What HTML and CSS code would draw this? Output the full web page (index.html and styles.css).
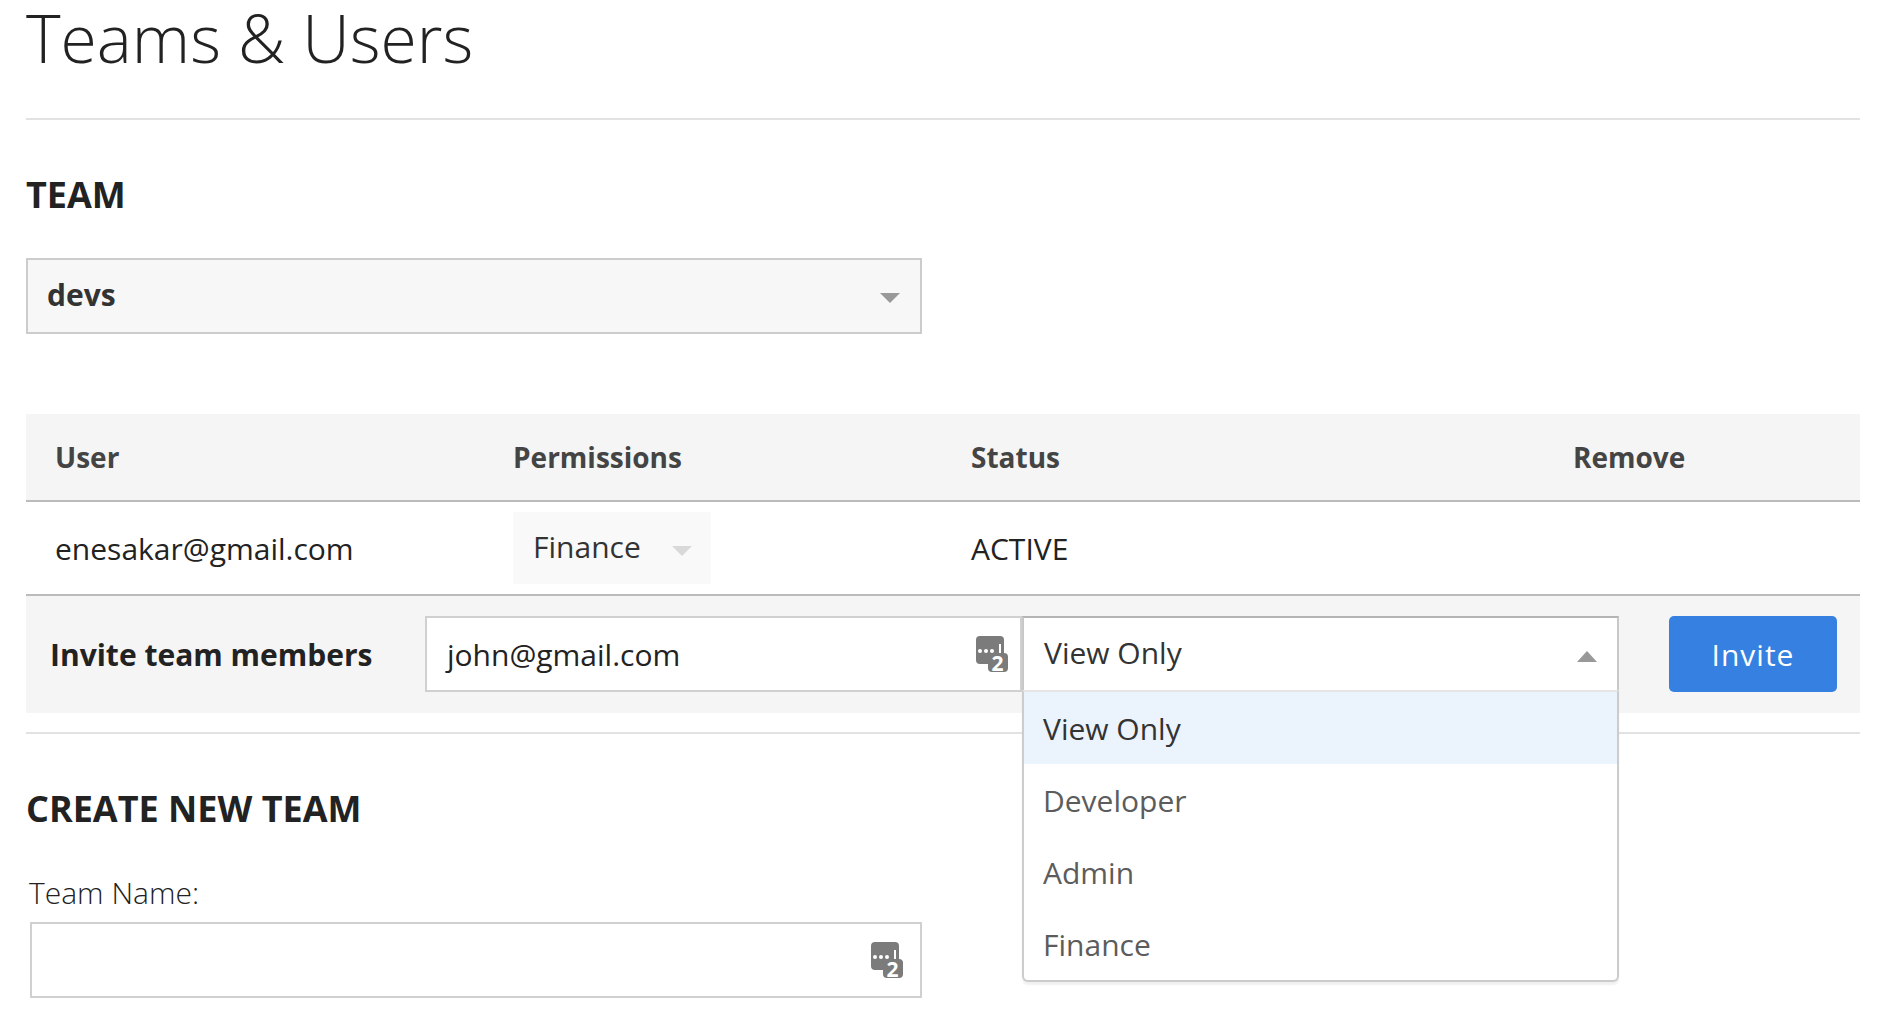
FILE: index.html
```html
<!DOCTYPE html>
<html lang="en">
<head>
<meta charset="utf-8">
<title>Teams &amp; Users</title>
<link rel="stylesheet" href="styles.css">
</head>
<body>
<svg class="defs" aria-hidden="true">
  <symbol id="pw" viewBox="0 0 32 36">
    <rect x="0" y="0" width="28" height="28" rx="4" fill="#7b7b7b"/>
    <rect x="12" y="17" width="20" height="19" rx="4" fill="#7b7b7b"/>
    <circle cx="4" cy="15" r="2" fill="#fff"/><circle cx="10" cy="15" r="2" fill="#fff"/><circle cx="16" cy="15" r="2" fill="#fff"/>
    <rect x="23" y="8" width="2" height="9" fill="#fff"/>
    <text x="21.5" y="35" class="pw-num">2</text>
  </symbol>
</svg>
<main class="page">
  <h1 class="title">Teams &amp; Users</h1>
  <h2 class="heading team-heading">TEAM</h2>
  <div class="team-select"><span>devs</span><i class="tri tri-down"></i></div>

  <div class="grid head">
    <div>User</div><div>Permissions</div><div>Status</div><div>Remove</div>
  </div>
  <div class="grid row">
    <div>enesakar@gmail.com</div>
    <div><div class="perm"><span>Finance</span><i class="tri tri-light"></i></div></div>
    <div>ACTIVE</div>
    <div></div>
  </div>

  <div class="invite">
    <div class="invite-label">Invite team members</div>
    <div class="field email"><span>john@gmail.com</span><svg class="pw"><use href="#pw"/></svg></div>
    <div class="role">
      <div class="role-value"><span>View Only</span><i class="tri tri-up"></i></div>
      <ul class="menu">
        <li class="on">View Only</li>
        <li>Developer</li>
        <li>Admin</li>
        <li>Finance</li>
      </ul>
    </div>
    <button class="btn">Invite</button>
  </div>

  <hr class="rule">
  <h2 class="heading create-heading">CREATE NEW TEAM</h2>
  <label class="name-label">Team Name:</label>
  <div class="field name"><svg class="pw"><use href="#pw"/></svg></div>
</main>
</body>
</html>
```
FILE: styles.css
```css
* { box-sizing: border-box; }
html, body { margin: 0; height: 1012px; overflow: hidden; background: #fff; }
body { font-family: "Open Sans", "Noto Sans", sans-serif; color: #222; }
.defs { width: 0; height: 0; position: absolute; }
.pw-num { font: 700 21px "Open Sans", sans-serif; fill: #fff; text-anchor: middle; }
.page { padding: 0 20px 0 26px; }

.title { margin: 0; height: 120px; font-size: 66px; line-height: 74px; font-weight: 300; color: #222; border-bottom: 2px solid #e2e2e2; }
.heading { margin: 0; font-weight: 700; color: #222; font-size: 36px; line-height: 46px; }
.team-heading { margin-top: 52px; }
.team-select { margin-top: 40px; width: 896px; height: 76px; background: #f7f7f7; border: 2px solid #ccc; display: flex; align-items: center; justify-content: space-between; padding: 0 20px 0 19px; font-size: 30px; font-weight: 700; color: #333; }
.team-select span { margin-top: -4px; }

.tri { width: 0; height: 0; display: block; border-left: 10px solid transparent; border-right: 10px solid transparent; }
.tri-down { border-top: 10px solid #999; margin-top: 4px; }
.tri-light { border-top: 10px solid #d9d9d9; margin-top: 6px; }
.tri-up { border-bottom: 11px solid #999; margin-top: 4px; }

.grid { display: grid; grid-template-columns: 458px 458px 602px 1fr; padding-left: 29px; align-items: center; }
.head { margin-top: 80px; height: 88px; background: #f5f5f5; border-bottom: 2px solid #bbb; font-size: 28px; font-weight: 700; color: #444; }
.row { height: 94px; border-bottom: 2px solid #bbb; font-size: 30px; color: #222; }
.perm { width: 198px; height: 72px; background: #f9f9f9; display: flex; align-items: center; justify-content: space-between; padding: 0 19px 0 20px; color: #333; }
.perm span { margin-top: -4px; }

.invite { height: 117px; background: #f5f5f5; display: flex; align-items: flex-start; padding: 20px 26px 0 24px; position: relative; }
.invite-label { flex: none; width: 375px; height: 76px; display: flex; align-items: center; font-size: 30px; font-weight: 700; color: #222; }
.field { background: #fff; border: 2px solid #d0d0d0; display: flex; align-items: center; justify-content: space-between; }
.email { flex: none; width: 597px; height: 76px; padding: 0 12px 0 20px; font-size: 30px; color: #222; }
.pw { width: 32px; height: 36px; display: block; }
.role { flex: none; width: 597px; position: relative; }
.role-value { height: 76px; background: #fff; border: 2px solid #c8c8c8; border-top-color: #b4b4b4; display: flex; align-items: center; justify-content: space-between; padding: 0 20px 0 20px; font-size: 30px; color: #333; }
.role-value span { margin-top: -3px; }
.menu { list-style: none; margin: 0; padding: 0; position: absolute; left: 0; right: 0; top: 74px; background: #fff; border: 2px solid #ccc; border-top-color: #e5e5e5; border-radius: 0 0 6px 6px; box-shadow: 0 3px 2px rgba(0,0,0,.06); z-index: 2; font-size: 30px; color: #5c5c5c; }
.menu li { height: 72px; line-height: 74px; padding-left: 19px; }
.menu li.on { background: #ebf3fd; color: #333; }
.btn { flex: none; margin-left: 50px; width: 168px; height: 76px; background: #3580e0; border: 0; border-radius: 5px; color: #fff; font: 400 30px "Open Sans", sans-serif; letter-spacing: 1px; }

.rule { margin: 19px 0 0; border: 0; height: 2px; background: #e2e2e2; }
.create-heading { margin-top: 52px; }
.name-label { display: block; margin: 39px 0 0 3px; font-size: 30px; font-weight: 300; line-height: 44px; color: #222; }
.name { margin: 7px 0 0 4px; width: 892px; height: 76px; justify-content: flex-end; padding-right: 17px; }
```
